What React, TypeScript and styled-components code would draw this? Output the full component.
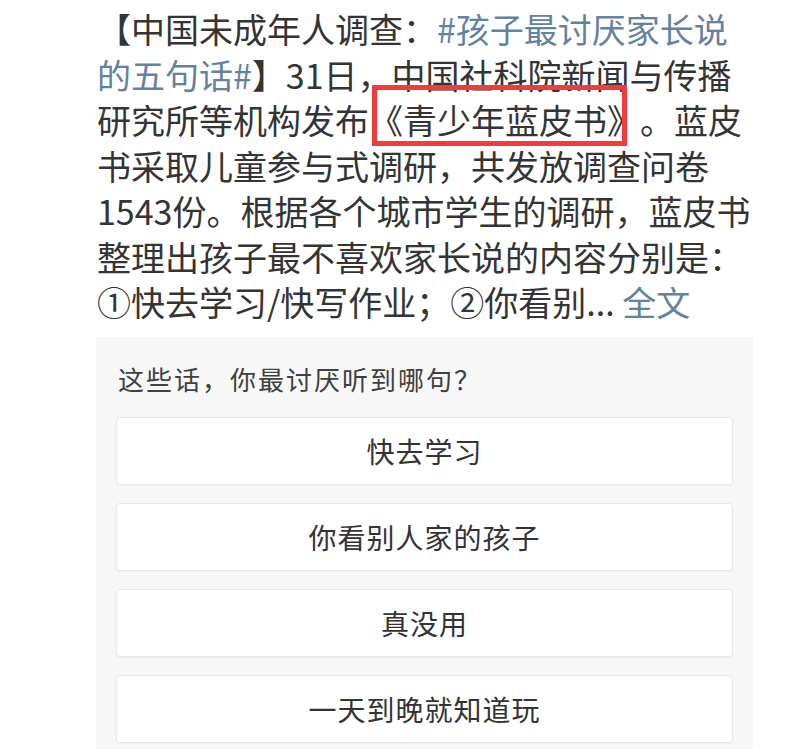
import React from "react";
import styled, { createGlobalStyle } from "styled-components";

const Global = createGlobalStyle`
  html, body { margin: 0; padding: 0; background: #ffffff; }
  body { font-family: "Noto Sans CJK SC", "Noto Sans", sans-serif; }
`;

const Page = styled.div`
  width: 795px;
  height: 749px;
  overflow: hidden;
  padding: 6px 0 0 97px;
  box-sizing: border-box;
`;

const Post = styled.div`
  font-size: 34px;
  line-height: 45.5px;
  color: #343434;
  white-space: nowrap;
`;

const Line = styled.div``;

const Link = styled.span`
  color: #62829f;
`;

const Boxed = styled.span`
  position: relative;
  margin-right: 16px;
  &::after {
    content: "";
    position: absolute;
    left: 3px;
    right: -3px;
    top: -10px;
    bottom: -2px;
    border: 5px solid #f23c3c;
  }
`;

const Card = styled.div`
  margin: 12px 0 0 -1px;
  width: 657px;
  background: #f7f7f7;
  padding: 22px 20px 30px;
  box-sizing: border-box;
`;

const Question = styled.div`
  font-size: 26px;
  line-height: 40px;
  color: #404040;
  padding-left: 2px;
  letter-spacing: 2px;
  margin-bottom: 18px;
`;

const Options = styled.div`
  display: flex;
  flex-direction: column;
  gap: 18px;
`;

const Option = styled.div`
  height: 68px;
  background: #ffffff;
  border: 1px solid #e8e8e8;
  border-radius: 4px;
  box-shadow: 0 1px 2px rgba(0, 0, 0, 0.04);
  box-sizing: border-box;
  display: flex;
  align-items: center;
  justify-content: center;
  font-size: 28px;
  letter-spacing: 1px;
  color: #333333;
`;

const options = ["快去学习", "你看别人家的孩子", "真没用", "一天到晚就知道玩"];

export default function App() {
  return (
    <>
      <Global />
      <Page>
        <Post>
          <Line>
            【中国未成年人调查：<Link>#孩子最讨厌家长说</Link>
          </Line>
          <Line>
            <Link>的五句话#</Link>】31日，中国社科院新闻与传播
          </Line>
          <Line>
            研究所等机构发布<Boxed>《青少年蓝皮书》</Boxed>。蓝皮
          </Line>
          <Line>书采取儿童参与式调研，共发放调查问卷</Line>
          <Line>1543份。根据各个城市学生的调研，蓝皮书</Line>
          <Line>整理出孩子最不喜欢家长说的内容分别是：</Line>
          <Line>
            ①快去学习/快写作业；②你看别... <Link>全文</Link>
          </Line>
        </Post>
        <Card>
          <Question>这些话，你最讨厌听到哪句？</Question>
          <Options>
            {options.map((o) => (
              <Option key={o}>{o}</Option>
            ))}
          </Options>
        </Card>
      </Page>
    </>
  );
}
